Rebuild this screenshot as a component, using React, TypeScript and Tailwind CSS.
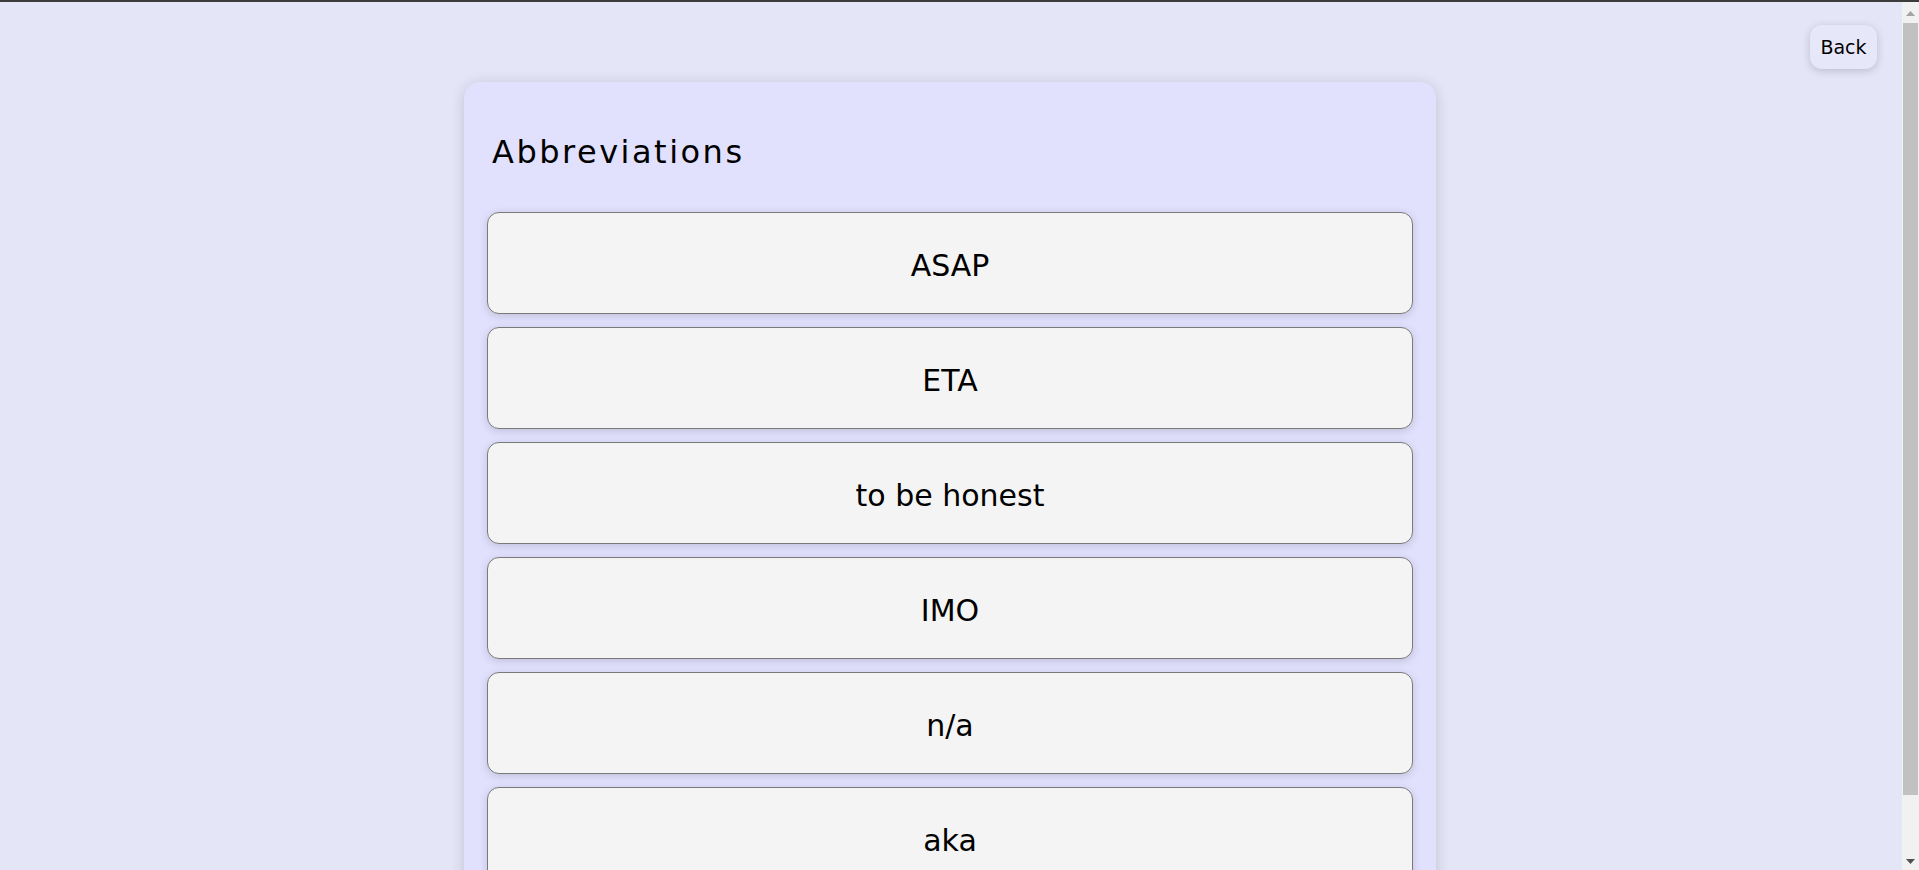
import React from "react";

const items = ["ASAP", "ETA", "to be honest", "IMO", "n/a", "aka", "FYI"];

export default function App() {
  return (
    <div className="h-[870px] w-full flex flex-col overflow-hidden" style={{ fontFamily: '"DejaVu Sans", Verdana, sans-serif' }}>
      <div className="h-[2px] w-full bg-[#3c3c3c] shrink-0" />
      <div className="flex flex-row flex-1 min-h-0">
        <main className="relative flex-1 min-w-0 overflow-hidden bg-[#e5e5f8] pr-[2px]">
          <button className="absolute top-[23px] right-[25px] h-[44px] w-[67px] rounded-[12px] bg-[#e7e7fa] text-[19px] text-black shadow-[0_2px_8px_rgba(0,0,0,0.18)] flex items-center justify-center">
            Back
          </button>
          <section className="mx-auto mt-[80px] w-[972px] rounded-[16px] bg-[#e1e1fe] px-[23px] pt-[54px] pb-[24px] shadow-[0_2px_14px_rgba(0,0,0,0.16)]">
            <h1 className="ml-[5px] text-[32px] leading-none tracking-[2.5px] text-black font-normal">
              Abbreviations
            </h1>
            <div className="mt-[44px] flex flex-col gap-[13px]">
              {items.map((t) => (
                <div
                  key={t}
                  className="h-[102px] pt-[5px] rounded-[12px] border border-[#7a7a7a] bg-[#f4f4f4] shadow-[0_2px_8px_rgba(0,0,0,0.15)] flex items-center justify-center text-[30px] text-black"
                >
                  {t}
                </div>
              ))}
            </div>
          </section>
        </main>
        <div className="w-[17px] shrink-0 bg-[#f1f1f1] flex flex-col">
          <div className="h-[21px] flex items-center justify-center pt-[2px]">
            <svg width="9" height="5" viewBox="0 0 9 5">
              <polygon points="0,5 4.5,0 9,5" fill="#a3a3a3" />
            </svg>
          </div>
          <div className="flex-1 flex flex-col">
            <div className="mx-[1px] h-[772px] bg-[#c1c1c1]" />
          </div>
          <div className="h-[17px] flex items-center justify-center">
            <svg width="9" height="5" viewBox="0 0 9 5">
              <polygon points="0,0 9,0 4.5,5" fill="#505050" />
            </svg>
          </div>
        </div>
      </div>
    </div>
  );
}
